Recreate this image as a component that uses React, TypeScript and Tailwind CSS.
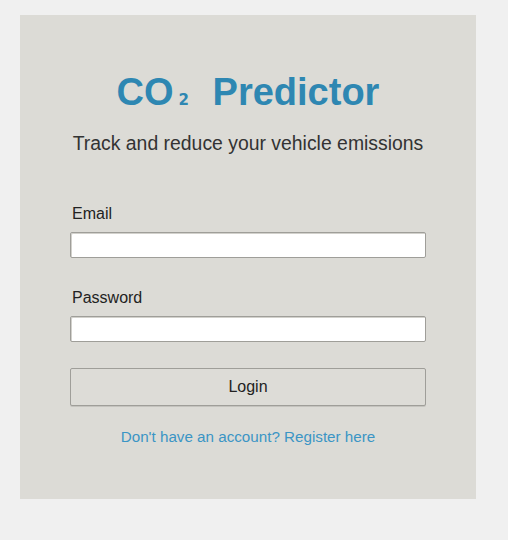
import { useState } from "react";

export default function App() {
  const [email, setEmail] = useState("");
  const [password, setPassword] = useState("");

  return (
    <div className="min-h-[540px] w-full bg-[#f0f0f0] pl-[20px] pt-[15px] font-['Liberation_Sans',Arial,sans-serif]">
      <div className="flex h-[484px] w-[456px] flex-col bg-[#dcdbd6] px-[50px] pt-[55px]">
        <h1 className="text-center text-[38px] font-bold leading-[44px] text-[#2e87b2]">
          CO
          <span className="ml-[5px] mr-[13px] font-['DejaVu_Sans',sans-serif] text-[15px] font-bold leading-none">2</span>{" "}
          Predictor
        </h1>
        <p className="mt-[18px] text-center text-[19.4px] leading-[22px] text-[#333333]">
          Track and reduce your vehicle emissions
        </p>

        {/* --- form --- */}
        <form onSubmit={(e) => e.preventDefault()} className="flex flex-col">
          <label htmlFor="email" className="mt-[50px] pl-[2px] text-[16px] leading-[19px] text-[#222222]">
            Email
          </label>
          <input
            id="email"
            type="email"
            value={email}
            onChange={(e) => setEmail(e.target.value)}
            className="mt-[9px] h-[26px] w-full rounded-[2px] border border-[#9f9e99] bg-white px-2 text-[14px] shadow-[inset_1px_1px_0_#d2d1cc] outline-none"
          />

          <label htmlFor="password" className="mt-[30px] pl-[2px] text-[16px] leading-[19px] text-[#222222]">
            Password
          </label>
          <input
            id="password"
            type="password"
            value={password}
            onChange={(e) => setPassword(e.target.value)}
            className="mt-[9px] h-[26px] w-full rounded-[2px] border border-[#9f9e99] bg-white px-2 text-[14px] shadow-[inset_1px_1px_0_#d2d1cc] outline-none"
          />

          <button
            type="submit"
            className="mt-[26px] h-[38px] w-full rounded-[2px] border border-[#9f9e99] bg-[#dddcd7] text-[16px] text-[#222222] shadow-[0_1px_0_#c4c3be]"
          >
            Login
          </button>
        </form>

        <a href="#" className="mt-[22px] text-center text-[15.2px] leading-[18px] text-[#3b95c5]">
          Don't have an account? Register here
        </a>
      </div>
    </div>
  );
}
